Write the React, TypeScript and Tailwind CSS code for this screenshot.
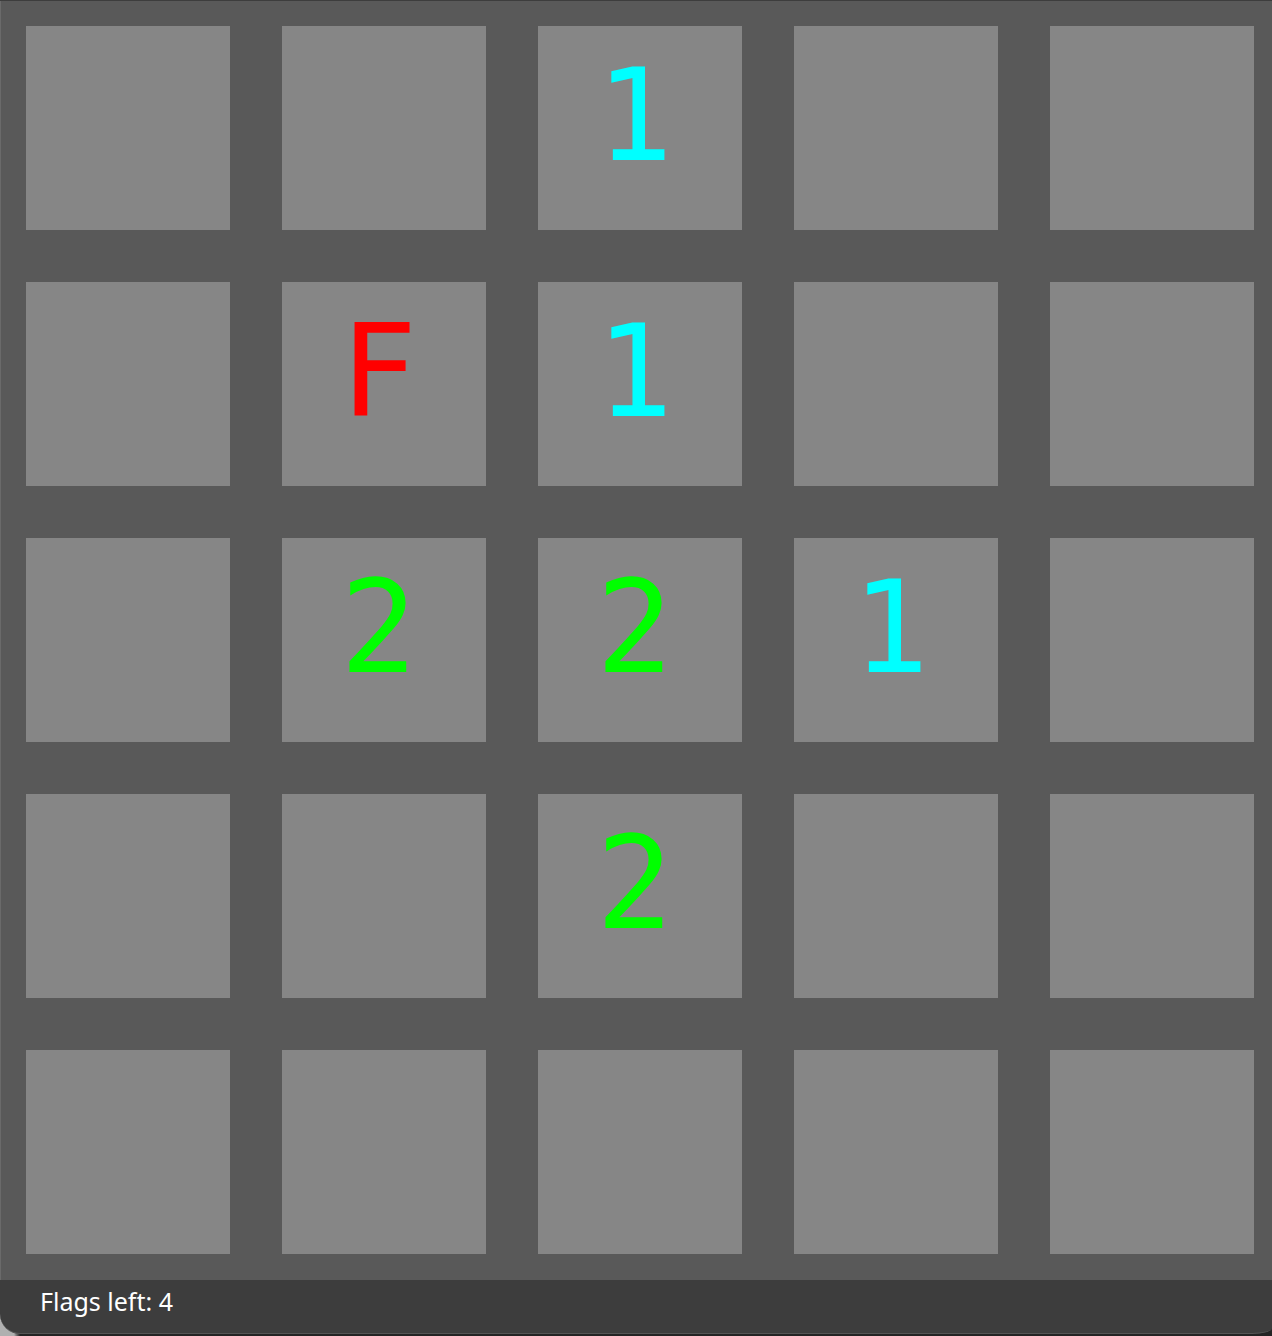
const rows: string[][] = [
  ["", "", "1", "", ""],
  ["", "F", "1", "", ""],
  ["", "2", "2", "1", ""],
  ["", "", "2", "", ""],
  ["", "", "", "", ""],
];

const colors: Record<string, string> = {
  "1": "text-[#00ffff]",
  "2": "text-[#00ff00]",
  F: "text-[#ff0000]",
};

export default function App() {
  return (
    <div className="flex min-h-screen flex-col bg-[#242424]">
      <main className="flex grow flex-col border-t border-[#3d3d3d] bg-[#595959]">
        <div className="grid grid-cols-5 gap-[52px] border-l border-[#6a6a6a] pt-[25px] pr-[18px] pb-[26px] pl-[25px] font-['DejaVu_Sans_Mono',monospace]">
          {rows.flatMap((row, r) =>
            row.map((value, c) => (
              <button
                key={`${r}-${c}`}
                type="button"
                aria-label={`Row ${r + 1}, column ${c + 1}: ${value || "blank"}`}
                className="flex aspect-square items-start bg-[#868686] pt-[15px] pl-[58px]"
              >
                <span className={`text-[128px] leading-[150px] ${colors[value] ?? ""}`}>{value}</span>
              </button>
            )),
          )}
        </div>
        <div className="flex grow bg-linear-to-r from-[#b0b0b0] from-[14px] to-[#242424] to-[20px] pb-0.5">
          <footer className="grow rounded-bl-[20px] rounded-br-[20px_6px] border-b border-[#555555] bg-[#3d3d3d] px-10 pt-[7px] text-[25px] leading-7 text-white">
            <p className="font-['Noto_Sans',sans-serif]">Flags left: 4</p>
          </footer>
        </div>
      </main>
    </div>
  );
}
